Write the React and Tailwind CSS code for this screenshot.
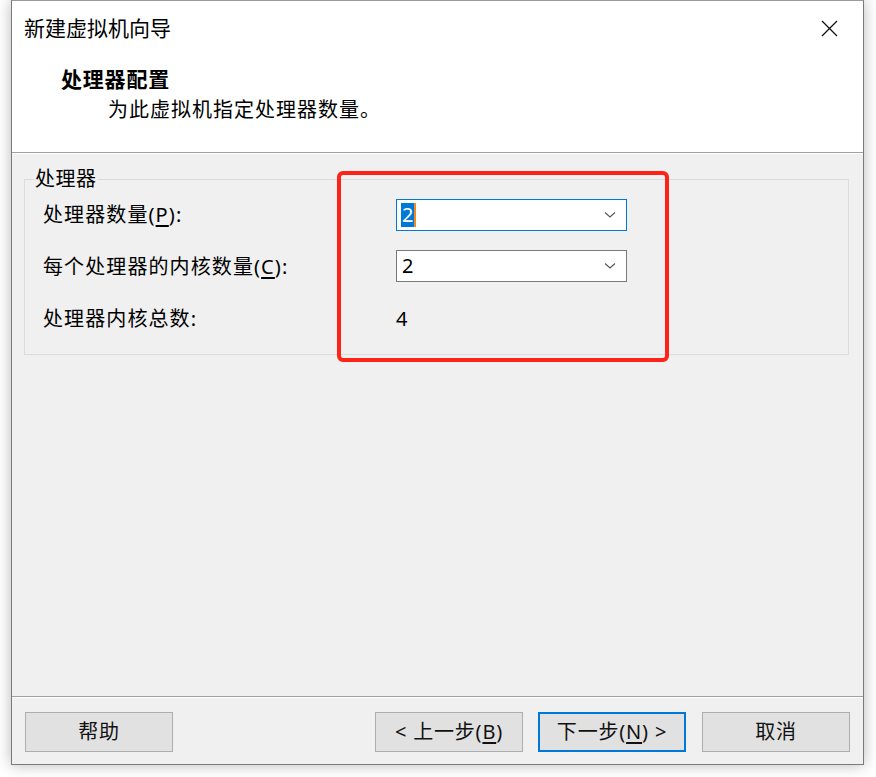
import React from "react";

const font = "font-['Noto_Sans','Noto_Sans_CJK_SC',sans-serif]";

const Mnemonic = ({ text, k }) => (
  <>
    {text}(<span className="underline underline-offset-[3px]">{k}</span>)
  </>
);

const Chevron = () => (
  <svg width="12" height="8" viewBox="0 0 12 8" className="mr-[10px]">
    <path d="M1 1.5 L6 6 L11 1.5" fill="none" stroke="#555" strokeWidth="1.1" />
  </svg>
);

const Combo = ({ value, focused }) => (
  <div
    className={`w-[231px] h-[32px] bg-white flex items-center justify-between ${
      focused ? "border border-[#0078d7]" : "border border-[#7a7a7a]"
    }`}
  >
    {focused ? (
      <span className="ml-[4px] flex items-center h-[24px] bg-[#0078d7] text-white px-[1px] text-[20px] leading-[24px] border-r-2 border-[#f08a24]">
        {value}
      </span>
    ) : (
      <span className="ml-[5px] text-[20px] leading-[24px] text-black">{value}</span>
    )}
    <Chevron />
  </div>
);

const Button = ({ children, primary, className = "" }) => (
  <button
    className={`w-[148px] h-[40px] bg-[#e1e1e1] text-[20px] tracking-[0.8px] text-[#111] flex items-center justify-center ${
      primary ? "border-2 border-[#0078d7]" : "border border-[#adadad]"
    } ${className}`}
  >
    {children}
  </button>
);

export default function App() {
  return (
    <div className={`w-[876px] h-[777px] bg-white relative ${font}`}>
      <div className="ml-[11px] w-[853px] h-[765px] border border-[#7a7a7a] border-t-[#9a9a9a] bg-[#f0f0f0] flex flex-col shadow-[0_0_14px_rgba(0,0,0,0.28)]">
        {/* header */}
        <div className="bg-white h-[152px] border-b border-[#a0a0a0] flex flex-col">
          <div className="flex items-center justify-between h-[54px] pl-[12px] pr-[25px]">
            <span className="text-[21px] leading-[28px] text-black">新建虚拟机向导</span>
            <svg width="17" height="17" viewBox="0 0 17 17">
              <path d="M1 1 L16 16 M16 1 L1 16" stroke="#111" strokeWidth="1.3" fill="none" />
            </svg>
          </div>
          <div className="pl-[49px] mt-[10px] text-[21px] tracking-[0.8px] leading-[28px] font-bold text-black">处理器配置</div>
          <div className="pl-[96px] mt-[3px] text-[20px] tracking-[1px] leading-[28px] text-black">为此虚拟机指定处理器数量。</div>
        </div>
        <div className="h-[1px] bg-white" />

        {/* body */}
        <div className="flex-1 px-[12px] pt-[25px]">
          <div className="relative border border-[#dcdcdc] w-[825px] pt-[19px] pb-[19px] pl-[18px]">
            <span className="absolute left-[9px] top-[-14px] bg-[#f0f0f0] px-[1px] text-[20px] tracking-[0.5px] leading-[26px] text-black">
              处理器
            </span>
            <div className="grid grid-cols-[353px_231px] items-center gap-y-[17px]">
              <span className="text-[20px] leading-[32px] text-black tracking-[1.1px]">
                <Mnemonic text="处理器数量" k="P" />:
              </span>
              <Combo value="2" focused />
              <span className="text-[20px] leading-[32px] text-black tracking-[1.1px] mt-[3px]">
                <Mnemonic text="每个处理器的内核数量" k="C" />:
              </span>
              <Combo value="2" />
              <span className="text-[20px] leading-[32px] text-black tracking-[1.1px] mt-[3px]">处理器内核总数:</span>
              <span className="text-[20px] leading-[32px] text-black mt-[3px]">4</span>
            </div>
          </div>
        </div>

        {/* footer */}
        <div className="border-t border-[#a0a0a0] shadow-[inset_0_1px_0_#fff] h-[68px] flex items-start pt-[15px] px-[13px]">
          <Button>帮助</Button>
          <div className="flex-1" />
          <Button>
            &lt; <Mnemonic text=" 上一步" k="B" />
          </Button>
          <Button primary className="ml-[15px]">
            <Mnemonic text="下一步" k="N" /> &gt;
          </Button>
          <Button className="ml-[16px]">取消</Button>
        </div>
      </div>

      {/* annotation */}
      <div className="absolute left-[337px] top-[171px] w-[332px] h-[191px] border-[4px] border-[#ff2317] rounded-[6px]" />
    </div>
  );
}
